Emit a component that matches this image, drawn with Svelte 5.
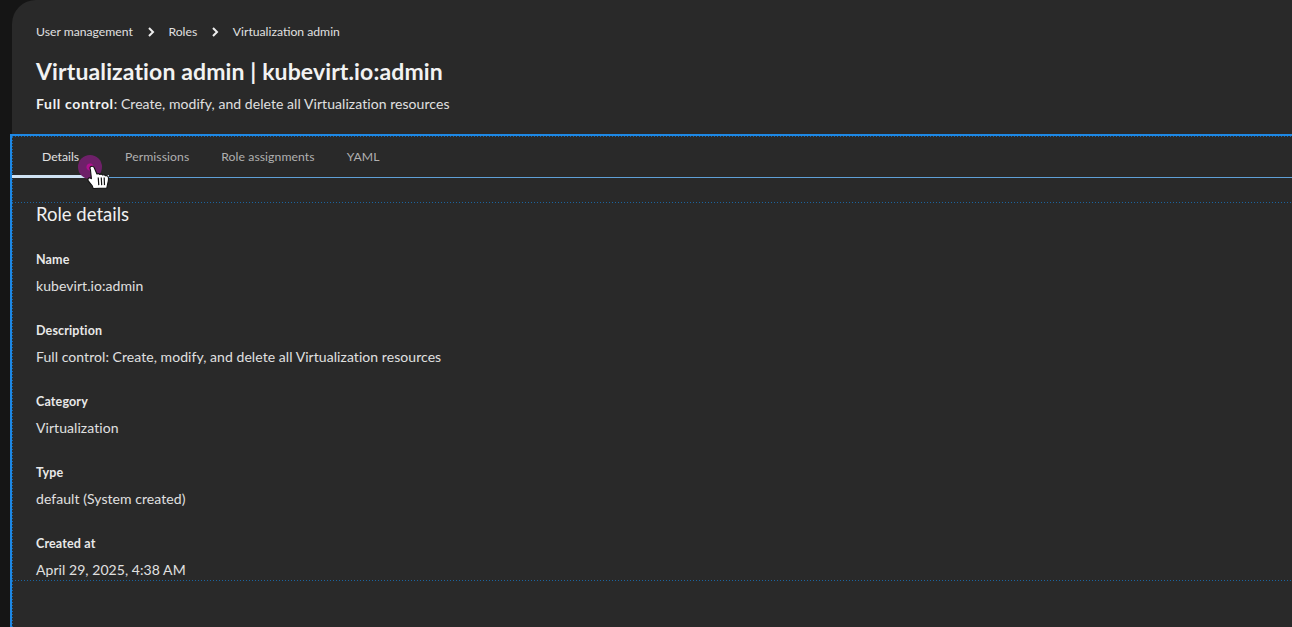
<script>
	const fields = [
		{ label: 'Name', value: 'kubevirt.io:admin' },
		{ label: 'Description', value: 'Full control: Create, modify, and delete all Virtualization resources' },
		{ label: 'Category', value: 'Virtualization' },
		{ label: 'Type', value: 'default (System created)' },
		{ label: 'Created at', value: 'April 29, 2025, 4:38 AM' }
	];
	const tabs = ['Details', 'Permissions', 'Role assignments', 'YAML'];
</script>

<div class="shell">
	<main class="panel">
		<header class="page-head">
			<nav class="crumbs">
				<span>User management</span>
				<svg class="sep" viewBox="0 0 8 10" width="8" height="10"><path d="M2 1l4 4-4 4" fill="none" stroke="#eeeeee" stroke-width="2" /></svg>
				<span>Roles</span>
				<svg class="sep" viewBox="0 0 8 10" width="8" height="10"><path d="M2 1l4 4-4 4" fill="none" stroke="#eeeeee" stroke-width="2" /></svg>
				<span>Virtualization admin</span>
			</nav>
			<h1>Virtualization admin | kubevirt.io:admin</h1>
			<p class="lead"><strong>Full control</strong>: Create, modify, and delete all Virtualization resources</p>
		</header>

		<section class="tab-area">
			<div class="tabs">
				{#each tabs as tab, i}
					<button class="tab" class:active={i === 0}>{tab}</button>
				{/each}
			</div>
			<div class="details">
				<h2>Role details</h2>
				<dl>
					{#each fields as f}
						<dt>{f.label}</dt>
						<dd>{f.value}</dd>
					{/each}
				</dl>
			</div>
		</section>
	</main>

	<div class="click-dot"></div>
	<svg class="hand" viewBox="0 0 30 30" width="30" height="30">
		<g transform="translate(1.500 -.8) scale(1.080)">
			<path d="M8 7.500c.8-1.500 3-1.300 3.700.2l2.600 6c.9-.5 2-.3 2.600.4.900-.6 2.200-.3 2.700.6.900-.5 2.200-.2 2.700.7.900-.3 2-.1 2.400.9.500 1.300.1 4.500-.6 7l-.7 3.500-12.500.4-1-2.600-3.600-4.600c-.6-1-.3-2.100.5-2.500.8-.4 1.700-.2 2.400.5L8.300 10c-.4-.9-.7-1.700-.3-2.500z" fill="#fff" stroke="#111" stroke-width="1" stroke-linejoin="round" />
			<path d="M15.500 17l.5 7M18.300 17l.4 7M21 17l.3 7" stroke="#111" stroke-width="1.100" fill="none" />
		</g>
	</svg>
</div>

<style>
	:global(body) {
		margin: 0;
		background: #151515;
		overflow: hidden;
	}

	.shell {
		position: relative;
		height: 627px;
		overflow: hidden;
		padding-left: 12px;
		font-family: 'Lato', sans-serif;
		color: #e0e0e0;
	}

	.panel {
		background: #292929;
		height: 627px;
		border-top-left-radius: 24px;
	}

	.page-head {
		padding: 24px 24px 0;
		height: 110px;
		box-sizing: border-box;
	}

	.crumbs {
		display: flex;
		align-items: center;
		gap: 13.800px;
		font-size: 12.200px;
		line-height: 16px;
		color: #e0e0e0;
	}

	h1 {
		margin: 16px 0 0;
		font-size: 23px;
		line-height: 30px;
		font-weight: 700;
		letter-spacing: 0.120px;
		color: #f2f2f2;
	}

	.lead {
		margin: 9px 0 0;
		font-size: 14px;
		line-height: 18px;
		letter-spacing: 0.060px;
	}

	.lead strong {
		font-weight: 700;
		letter-spacing: 0.650px;
		color: #f2f2f2;
	}

	.tab-area {
		position: relative;
		margin: 24px 0 0 -2px;
		height: 493px;
		box-sizing: border-box;
		border-top: 2px solid #1e88e5;
		border-left: 2px solid #1e88e5;
		background:
			repeating-linear-gradient(90deg, #1b649f 0 1px, transparent 1px 3px) top / 100% 1px no-repeat,
			repeating-linear-gradient(0deg, #1b649f 0 1px, transparent 1px 3px) left / 1px 100% no-repeat;
	}

	.tabs {
		display: flex;
		height: 41px;
		border-bottom: 1px solid #5f9fd6;
	}

	.tab {
		background: none;
		border: 0;
		padding: 0 16px;
		margin: 0;
		font: inherit;
		font-size: 12.200px;
		letter-spacing: 0.080px;
		color: #b0b0b0;
		height: 41px;
	}

	.tab.active {
		color: #e0e0e0;
		padding: 0 30px;
		letter-spacing: 0;
		box-shadow: inset 0 -2px 0 #cfe2f3, 0 1px 0 #cfe2f3;
	}

	.details {
		margin-top: 24px;
		padding: 2px 24px 1px;
		background:
			repeating-linear-gradient(90deg, #1b649f 0 1px, transparent 1px 3px) top / 100% 1px no-repeat,
			repeating-linear-gradient(90deg, #1b649f 0 1px, transparent 1px 3px) bottom / 100% 1px no-repeat;
	}

	h2 {
		margin: 0;
		padding-bottom: 1px;
		font-size: 18.500px;
		line-height: 20px;
		font-weight: 400;
		color: #f0f0f0;
	}

	dl {
		margin: 0;
	}

	dt {
		margin-top: 26px;
		font-size: 12.500px;
		line-height: 18px;
		font-weight: 700;
		letter-spacing: 0.150px;
		color: #e8e8e8;
	}

	dd {
		margin: 6px 0 0;
		font-size: 14px;
		line-height: 21px;
		letter-spacing: 0.060px;
		color: #e0e0e0;
	}

	.click-dot {
		position: absolute;
		left: 78px;
		top: 155px;
		width: 24px;
		height: 24px;
		border-radius: 50%;
		background: radial-gradient(circle, #b0108f 0 3px, #6e2069 4px);
	}

	.hand {
		position: absolute;
		left: 80px;
		top: 160px;
	}
</style>
